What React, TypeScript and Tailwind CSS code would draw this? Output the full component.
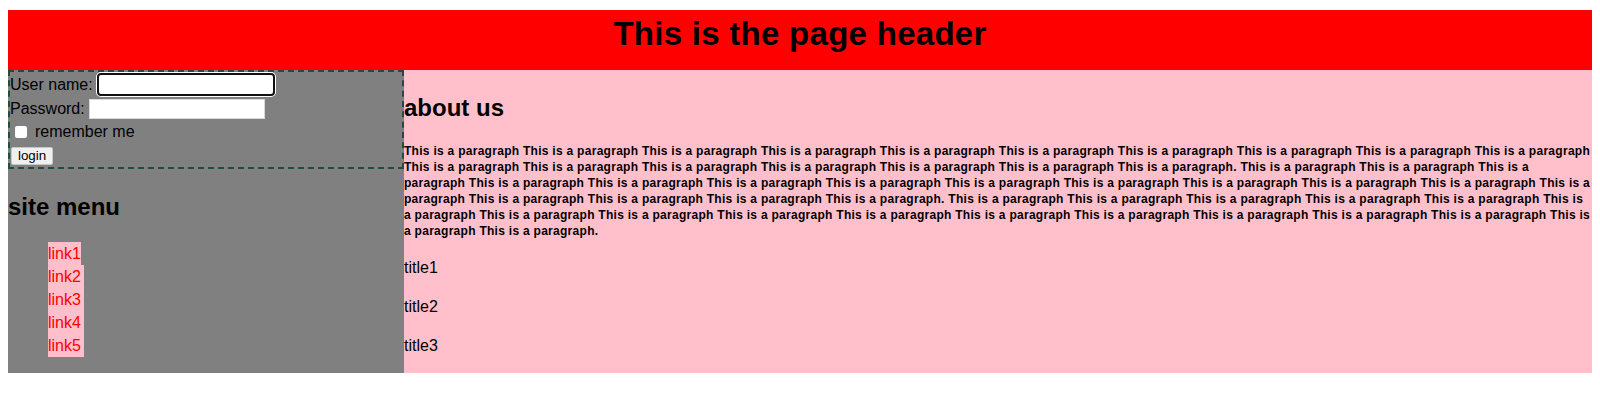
import React from "react";

const R = "This is a paragraph";
const rep = (n: number) => Array(n).fill(R).join(" ");

const lines: string[] = [
  rep(10),
  rep(7) + ". " + rep(2) + " This is a",
  "paragraph " + rep(9) + " This is a",
  "paragraph " + rep(4) + ". " + rep(5) + " This is",
  "a paragraph " + rep(9) + " This is",
  "a paragraph " + R + ".",
];

const links = ["link1", "link2", "link3", "link4", "link5"];

export default function App() {
  return (
    <div className="bg-white min-h-[410px] pt-[10px] px-[8px] font-['Liberation_Sans',Arial,sans-serif] text-black">
      <header className="h-[60px] bg-[#ff0000] pt-[6px] text-center">
        <h1 className="text-[33px] leading-[36px] font-bold tracking-[0.28px]">This is the page header</h1>
      </header>
      <div className="flex">
        <aside className="w-[396px] shrink-0 bg-[#808080] flex flex-col">
          <form className="border-2 border-dashed border-[#1f4e3f] flex flex-col text-[16px]">
            <div className="h-[25px] flex items-center">
              <span>User name:</span>
              <input
                type="text"
                className="ml-[4.5px] w-[178px] h-[23px] bg-white border-2 border-[#111] rounded-[4px] shadow-[0_0_0_1px_#ffffff] outline-none"
              />
            </div>
            <div className="h-[23px] flex items-center">
              <span>Password:</span>
              <input
                type="password"
                className="ml-[4px] w-[176px] h-[20px] bg-white border border-[#d8d8d8] outline-none"
              />
            </div>
            <div className="h-[24px] flex items-center">
              <input
                type="checkbox"
                className="appearance-none ml-[5px] w-[12px] h-[12px] bg-white rounded-[2px]"
              />
              <span className="ml-[8px]">remember me</span>
            </div>
            <div className="h-[23px] flex items-center">
              <button
                type="button"
                className="ml-[1px] h-[18px] px-[6px] bg-[#f0f0f0] border border-[#c8c8c8] rounded-[2px] text-[13.33px] leading-[14px]"
              >
                login
              </button>
            </div>
          </form>
          <h2 className="mt-[24px] text-[24px] leading-[28px] font-bold">site menu</h2>
          <ul className="mt-[21px] mb-[16px] pl-[40px] flex flex-col items-start text-[16px]">
            {links.map((l, i) => (
              <li key={l} className="h-[23px]">
                <a
                  href="#"
                  className={
                    i === 0
                      ? "inline-block h-[23px] leading-[23px] bg-[#ffc0cb] text-[#ff0000]"
                      : "inline-block h-[23px] leading-[23px] bg-[#ffc0cb] text-[#ff0000] pr-[3px]"
                  }
                >
                  {l}
                </a>
              </li>
            ))}
          </ul>
        </aside>
        <main className="flex-1 bg-[#ffc0cb] flex flex-col">
          <h2 className="mt-[24px] text-[24px] leading-[28px] font-bold">about us</h2>
          <p className="mt-[21px] text-[12px] leading-[16px] font-bold tracking-[0.28px] whitespace-nowrap">
            {lines.map((t, i) => (
              <React.Fragment key={i}>
                {t}
                {i < lines.length - 1 && <br />}
              </React.Fragment>
            ))}
          </p>
          <p className="mt-[17px] text-[16px] leading-[23px]">title1</p>
          <p className="mt-[16px] text-[16px] leading-[23px]">title2</p>
          <p className="mt-[16px] mb-[16px] text-[16px] leading-[23px]">title3</p>
        </main>
      </div>
    </div>
  );
}
